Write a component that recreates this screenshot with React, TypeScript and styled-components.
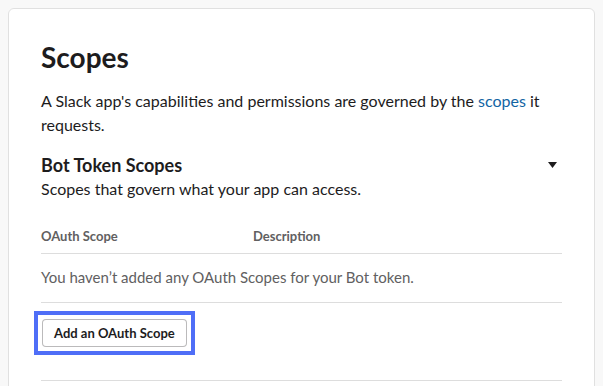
import React from "react";
import styled, { createGlobalStyle } from "styled-components";

const GlobalStyle = createGlobalStyle`
  html, body {
    background: #f8f8f8;
  }
  body {
    margin: 8px;
    font-family: Lato, "Noto Sans", sans-serif;
    color: #1d1c1d;
    -webkit-font-smoothing: antialiased;
  }
`;

const Card = styled.section`
  background: #fff;
  border: 1px solid #e0e0e0;
  border-radius: 6px;
  padding: 30px 32px 40px;
  min-height: 420px;
`;

const Title = styled.h1`
  margin: 0;
  font-size: 28px;
  line-height: 36px;
  font-weight: 700;
`;

const Intro = styled.p`
  margin: 14px 0 0;
  font-size: 16px;
  line-height: 24px;
`;

const TextLink = styled.a`
  color: #1264a3;
  text-decoration: none;
`;

const SectionHead = styled.div`
  margin-top: 16px;
  display: flex;
  align-items: center;
  justify-content: space-between;
`;

const SectionTitle = styled.h2`
  margin: 0;
  font-size: 18px;
  line-height: 24px;
  font-weight: 700;
`;

const Caret = styled.svg`
  width: 9px;
  height: 6px;
  margin-right: 5px;
  fill: #1d1c1d;
`;

const SectionSub = styled.p`
  margin: 0;
  font-size: 16px;
  line-height: 23px;
`;

const TableHead = styled.div`
  margin-top: 27px;
  display: grid;
  grid-template-columns: 212px 1fr;
  padding-bottom: 8px;
  border-bottom: 1px solid #dddddd;
`;

const HeadCell = styled.span`
  font-size: 13px;
  line-height: 18px;
  font-weight: 700;
  color: #616061;
`;

const EmptyRow = styled.p`
  margin: 0;
  padding: 12px 0 13px;
  font-size: 15px;
  line-height: 23px;
  color: #616061;
  border-bottom: 1px solid #dddddd;
`;

const Actions = styled.div`
  padding: 16px 0 33px;
  border-bottom: 1px solid #dddddd;
`;

const Button = styled.button`
  position: relative;
  height: 28px;
  padding: 0 11px;
  margin-left: 1px;
  font-family: Lato, "Noto Sans", sans-serif;
  font-size: 13px;
  font-weight: 700;
  color: #1d1c1d;
  background: #fff;
  border: 1px solid rgba(29, 28, 29, 0.3);
  border-radius: 4px;
  outline: none;
  cursor: pointer;

  &::after {
    content: "";
    position: absolute;
    inset: -9px;
    border: 4px solid #4f6ef7;
    pointer-events: none;
  }
`;

const App: React.FC = () => {
  return (
    <>
      <GlobalStyle />
      <Card>
        <Title>Scopes</Title>
        <Intro>
          A Slack app's capabilities and permissions are governed by the{" "}
          <TextLink href="#">scopes</TextLink> it requests.
        </Intro>
        <SectionHead>
          <SectionTitle>Bot Token Scopes</SectionTitle>
          <Caret viewBox="0 0 9 6" aria-hidden="true">
            <path d="M0 0h9L4.5 6z" />
          </Caret>
        </SectionHead>
        <SectionSub>Scopes that govern what your app can access.</SectionSub>
        <TableHead>
          <HeadCell>OAuth Scope</HeadCell>
          <HeadCell>Description</HeadCell>
        </TableHead>
        <EmptyRow>You haven’t added any OAuth Scopes for your Bot token.</EmptyRow>
        <Actions>
          <Button type="button">Add an OAuth Scope</Button>
        </Actions>
      </Card>
    </>
  );
};

export default App;
